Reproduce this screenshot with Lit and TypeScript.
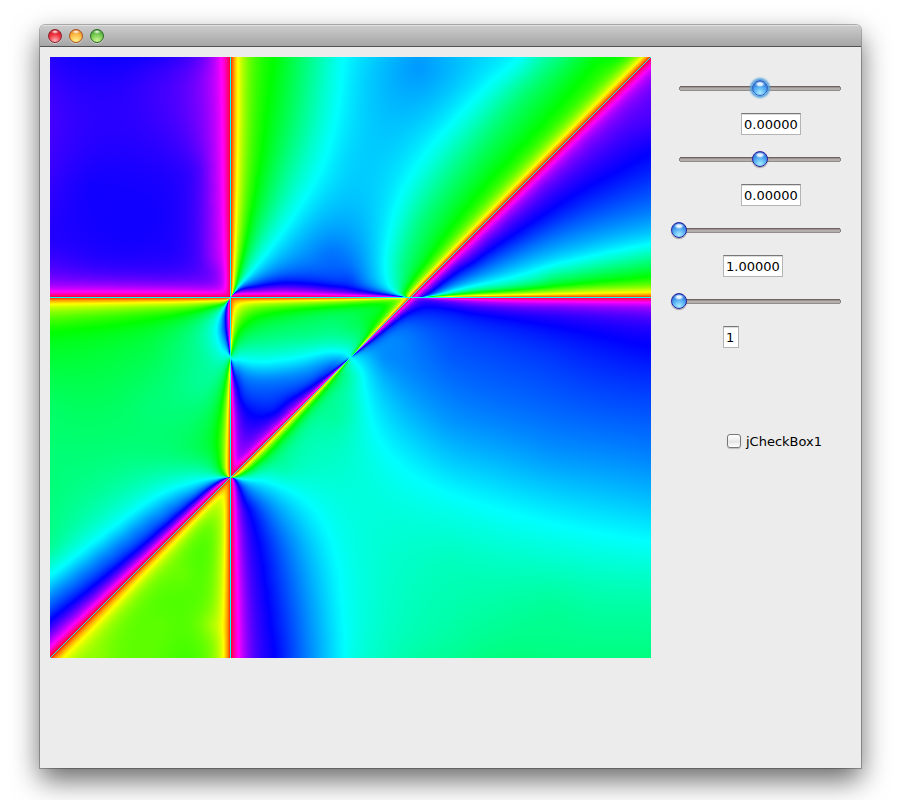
import { LitElement, html, css } from "lit";
import { customElement, property } from "lit/decorators.js";

/** Side of the plotted grid, in samples. */
const GRID = 601;

/** Contours of equal hue, keyed by hue in degrees: x, y pairs on the grid. */
const CONTOURS: Record<number, number[][]> = {
  60: [
    [187, 0, 187, 60, 186, 120, 184, 180, 182, 220], [592, 0, 549, 43, 483, 110, 417, 178, 380, 217],
    [600, 235, 500, 237, 440, 238], [233, 371, 203, 400, 190, 412], [174, 600, 174, 533, 175, 467, 173, 440],
    [13, 600, 50, 563, 100, 510, 150, 458], [0, 246, 100, 245, 160, 243], [178, 340, 178, 370, 177, 400],
    [182, 275, 185, 255, 195, 245, 250, 243, 310, 242],
  ],
  75: [[167, 450]],
  78: [[160, 567]],
  87: [[150, 467], [50, 600]],
  94: [[133, 517]],
  98: [[110, 567, 100, 600]],
  90: [[0, 257, 100, 250]],
  120: [
    [224, 0, 218, 50, 213, 93, 203, 150, 195, 190, 187, 223], [549, 0, 515, 38, 482, 75, 448, 111, 412, 153, 380, 196, 362, 223],
    [600, 218, 550, 223, 500, 229, 450, 234], [283, 323, 260, 348, 233, 379, 212, 402, 197, 415],
    [0, 275, 50, 270, 100, 263, 150, 253, 167, 247], [175, 325, 170, 350, 165, 383, 169, 408],
    [182, 290, 187, 276, 200, 263, 217, 257, 250, 252, 283, 249, 317, 246], [317, 278, 307, 291],
  ],
  125: [[317, 262]],
  132: [[0, 300]],
  138: [[150, 393]],
  139: [[100, 300]],
  142: [[300, 270]],
  144: [[0, 350]],
  146: [[133, 367]],
  148: [[0, 400], [100, 350], [130, 400]],
  150: [
    [257, 0, 247, 67, 220, 150], [508, 0, 472, 33, 440, 70, 402, 117, 368, 167, 352, 210],
    [600, 203, 550, 211, 500, 219], [600, 600, 500, 600], [0, 450], [100, 400], [200, 284, 233, 279, 267, 276],
  ],
  155: [[400, 600], [300, 320], [500, 550], [283, 360], [0, 490], [150, 300], [150, 330], [290, 280]],
  158: [[600, 553]],
  160: [[233, 413]],
  162: [[300, 350]],
  165: [[333, 600], [400, 500], [267, 400]],
  167: [[600, 520]],
  169: [[300, 400]],
  172: [[333, 450]],
  175: [[300, 600], [300, 500]],
  180: [
    [293, 0, 290, 33, 283, 73, 270, 113, 253, 143, 233, 173, 207, 207, 187, 230],
    [469, 0, 432, 33, 400, 67, 372, 100, 348, 143, 335, 200, 340, 230, 350, 239],
    [600, 187, 550, 197, 500, 209, 450, 222, 400, 233, 376, 239],
    [302, 304, 313, 327, 320, 360, 333, 390, 360, 417, 400, 437, 467, 458, 533, 473, 600, 484],
    [190, 421, 212, 423, 233, 430, 260, 447, 280, 480, 290, 527, 295, 600],
    [0, 518, 50, 480, 100, 443, 133, 428, 165, 421],
    [175, 247, 168, 263, 167, 276, 172, 291, 178, 298],
    [187, 303, 200, 305, 217, 305, 240, 302, 260, 298, 277, 295, 290, 296],
  ],
  190: [[300, 100], [400, 410]],
  193: [[320, 167]],
  196: [[333, 33], [350, 350], [600, 440]],
  204: [[367, 7], [500, 400], [400, 367]],
  209: [[333, 300], [600, 400]],
  210: [
    [300, 200], [257, 600, 252, 550, 238, 487, 215, 447, 195, 427], [0, 540, 50, 501, 100, 462, 133, 440, 160, 425],
    [600, 155, 550, 168, 500, 184, 450, 206, 400, 229], [190, 312, 203, 321, 217, 322, 250, 317, 280, 304],
  ],
  213: [[280, 195], [450, 350]],
  219: [[400, 300]],
  227: [[500, 300]],
  230: [[300, 223]],
  240: [
    [200, 231, 216, 227, 233, 225, 267, 227, 300, 232, 333, 237],
    [600, 95, 567, 114, 533, 132, 500, 153, 467, 175, 433, 197, 400, 220, 380, 235],
    [600, 290, 533, 275, 467, 263, 427, 257, 383, 250, 350, 260, 333, 273, 313, 290],
    [184, 423, 190, 433, 200, 450, 210, 487, 217, 533, 225, 600],
    [0, 562, 50, 523, 100, 482, 133, 453, 160, 430, 173, 422],
    [178, 247, 175, 260, 174, 273, 178, 293],
    [182, 308, 188, 333, 198, 351, 212, 359, 227, 355, 250, 338, 277, 317, 293, 304],
  ],
  244: [[40, 130], [60, 150]],
  248: [[0, 0], [100, 100], [0, 180], [100, 200]],
  252: [[100, 20]],
  257: [[600, 63]],
  259: [[130, 20], [150, 110, 150, 200], [0, 210], [207, 372]],
  270: [
    [150, 20], [0, 222, 100, 225, 160, 225], [600, 30, 550, 78, 517, 108, 483, 139, 417, 200],
    [600, 254, 500, 250, 420, 246], [198, 600, 196, 550, 192, 490, 187, 445], [0, 577, 50, 533, 100, 488, 150, 443],
    [184, 343, 188, 366, 194, 385, 207, 380, 223, 365, 250, 341],
  ],
  282: [[160, 20, 162, 100, 163, 200]],
  300: [
    [172, 20, 173, 100, 175, 200], [0, 235, 100, 235, 160, 235], [600, 9, 540, 67, 473, 133, 404, 200], [600, 244, 500, 243],
    [188, 600, 187, 533, 185, 467], [0, 590, 50, 543, 100, 495], [182, 366, 183, 400, 188, 407, 200, 396, 233, 365],
  ],
};

/** Points where the numerator of the field vanishes on a pole line. */
const BASE_POINTS = [180, 240, 180, 300, 180, 420, 300, 300, 360, 240];

const DEGREE = 8;
const FALLOFF = 0.15;
const SMOOTHING = 0.006;
const STEP = 20;
const unit = (p: number) => (p - 300) / 300;
const poles = (x: number, y: number) => (x + 0.4) * (y + 0.2) * (x + y);
/** Index of the region that the three pole lines cut out around a point. */
const region = (px: number, py: number) =>
  (px > 180 ? 1 : 0) + (py > 240 ? 2 : 0) + (px + py > 600 ? 4 : 0);
/** Distance to the nearest pole line, in grid steps. */
const poleDistance = (px: number, py: number) =>
  Math.min(Math.abs(px - 180), Math.abs(py - 240), Math.abs(px + py - 600) * Math.SQRT1_2);
const soften = (g: number) => g / Math.pow(1 + g * g, FALLOFF);

interface Sample {
  px: number;
  py: number;
  hue: number;
}

/** Points at a regular step along every contour, on a Catmull-Rom curve. */
function samples(): Sample[] {
  const out: Sample[] = [];
  for (const [deg, lines] of Object.entries(CONTOURS)) {
    const hue = Number(deg) / 360;
    for (const line of lines) {
      const last = line.length / 2 - 1;
      const at = (i: number, axis: number) => line[Math.max(0, Math.min(last, i)) * 2 + axis];
      for (let i = 0; i < last; i++) {
        const parts = Math.max(1, Math.round(Math.hypot(at(i + 1, 0) - at(i, 0), at(i + 1, 1) - at(i, 1)) / STEP));
        for (let k = 0; k < parts; k++) {
          const t = k / parts;
          const point = [0, 1].map((axis) => {
            const [a, b, c, d] = [at(i - 1, axis), at(i, axis), at(i + 1, axis), at(i + 2, axis)];
            return b + 0.5 * t * (c - a + t * (2 * a - 5 * b + 4 * c - d + t * (3 * (b - c) + d - a)));
          });
          out.push({ px: point[0], py: point[1], hue });
        }
      }
      out.push({ px: at(last, 0), py: at(last, 1), hue });
    }
  }
  return out;
}

function harden(t: number): number {
  let lo = 0;
  let hi = 1e4;
  for (let i = 0; i < 50; i++) {
    const mid = (lo + hi) / 2;
    if (soften(mid) < Math.abs(t)) lo = mid;
    else hi = mid;
  }
  return Math.sign(t) * lo;
}

function basis(x: number, y: number): number[] {
  const tx = [1, x];
  const ty = [1, y];
  for (let i = 2; i <= DEGREE; i++) {
    tx.push(2 * x * tx[i - 1] - tx[i - 2]);
    ty.push(2 * y * ty[i - 1] - ty[i - 2]);
  }
  const out: number[] = [];
  for (let i = 0; i <= DEGREE; i++) for (let j = 0; i + j <= DEGREE; j++) out.push(tx[i] * ty[j]);
  return out;
}

/** Gauss-Jordan elimination on an augmented matrix. */
function solve(m: number[][]): number[] {
  const n = m.length;
  for (let c = 0; c < n; c++) {
    let p = c;
    for (let r = c + 1; r < n; r++) if (Math.abs(m[r][c]) > Math.abs(m[p][c])) p = r;
    [m[c], m[p]] = [m[p], m[c]];
    for (let r = 0; r < n; r++) {
      if (r === c) continue;
      const f = m[r][c] / m[c][c];
      for (let k = c; k <= n; k++) m[r][k] -= f * m[c][k];
    }
  }
  return m.map((row, i) => row[n] / row[i]);
}

/** Weighted least squares for the numerator of the field. */
function fit(points: Sample[]): number[] {
  const n = ((DEGREE + 1) * (DEGREE + 2)) / 2;
  const m = Array.from({ length: n }, (_, i) => {
    const row = new Array(n + 1).fill(0);
    row[i] = 1e-2;
    return row;
  });
  const add = (x: number, y: number, value: number, w: number) => {
    const b = basis(x, y);
    for (let i = 0; i < n; i++) {
      for (let j = 0; j < n; j++) m[i][j] += w * w * b[i] * b[j];
      m[i][n] += w * w * b[i] * value;
    }
  };
  for (const { px, py, hue } of points) {
    const t = Math.tan(Math.PI * (0.5 - hue));
    const d = poles(unit(px), unit(py));
    add(unit(px), unit(py), harden(t) * d, 1 / ((Math.abs(d) + 0.003) * (1 + t * t)));
  }
  for (let k = 0; k < BASE_POINTS.length; k += 2) add(unit(BASE_POINTS[k]), unit(BASE_POINTS[k + 1]), 0, 30000);
  return solve(m);
}

function baseHue(coef: number[], px: number, py: number): number {
  const x = unit(px);
  const y = unit(py);
  const b = basis(x, y);
  let sum = 0;
  for (let i = 0; i < b.length; i++) sum += b[i] * coef[i];
  return 0.5 - Math.atan(soften(sum / poles(x, y))) / Math.PI;
}

interface Spline {
  xs: number[];
  ys: number[];
  weights: number[];
}

const kernel = (dx: number, dy: number) => Math.sqrt(dx * dx + dy * dy + 0.0004);

/** One smoothing spline per region, for what the fitted field leaves over. */
function corrections(points: Sample[], coef: number[]): Spline[] {
  return Array.from({ length: 8 }, (_, index) => {
    const cell = points.filter(({ px, py }) => region(px, py) === index && poleDistance(px, py) > 1);
    const n = cell.length;
    if (!n) return { xs: [], ys: [], weights: [0] };
    const xs = cell.map(({ px }) => unit(px));
    const ys = cell.map(({ py }) => unit(py));
    const m = cell.map(({ px, py, hue }, i) => {
      const slack = SMOOTHING * (1 + 40 / (1 + poleDistance(px, py)));
      const row = xs.map((_, j) => -kernel(xs[i] - xs[j], ys[i] - ys[j]) + (i === j ? slack : 0));
      row.push(1, hue - baseHue(coef, px, py));
      return row;
    });
    m.push([...new Array(n).fill(1), 0, 0]);
    return { xs, ys, weights: solve(m) };
  });
}

function correction({ xs, ys, weights }: Spline, x: number, y: number): number {
  let sum = weights[xs.length];
  for (let i = 0; i < xs.length; i++) sum -= weights[i] * kernel(x - xs[i], y - ys[i]);
  return sum;
}

function channel(hue: number, offset: number): number {
  const k = (offset + hue * 6) % 6;
  return Math.round(255 * (1 - Math.max(0, Math.min(k, 4 - k, 1))));
}

@customElement("hue-plot")
export class HuePlot extends LitElement {
  static styles = css`
    :host { display: block; }
    .plot { display: block; width: 100%; height: auto; }
  `;

  firstUpdated() {
    const canvas = this.renderRoot.querySelector("canvas") as HTMLCanvasElement;
    const ctx = canvas.getContext("2d")!;
    const image = ctx.createImageData(GRID, GRID);
    const points = samples();
    const coef = fit(points);
    const splines = corrections(points, coef);
    for (let py = 0; py < GRID; py++) {
      for (let px = 0; px < GRID; px++) {
        let hue = 0.5;
        const dist = poleDistance(px, py);
        if (dist > 0) {
          const extra = correction(splines[region(px, py)], unit(px), unit(py));
          hue = baseHue(coef, px, py) + extra * Math.min(1, dist / 8);
          hue = Math.max(0, Math.min(1, hue));
        }
        const o = (py * GRID + px) * 4;
        image.data[o] = channel(hue, 5);
        image.data[o + 1] = channel(hue, 3);
        image.data[o + 2] = channel(hue, 1);
        image.data[o + 3] = 255;
      }
    }
    ctx.putImageData(image, 0, 0);
  }

  render() {
    return html`<canvas class="plot" width=${GRID} height=${GRID} role="img" aria-label="Hue plot"></canvas>`;
  }
}

@customElement("value-slider")
export class ValueSlider extends LitElement {
  @property() name = "";
  @property() value = "";
  @property({ type: Number }) position = 0;
  @property({ type: Boolean }) active = false;
  @property({ type: Boolean }) left = false;
  @property({ type: Boolean }) short = false;

  static styles = css`
    :host { display: flex; flex-direction: column; gap: 17px; }
    .range {
      -webkit-appearance: none; appearance: none; display: block; box-sizing: border-box;
      width: 100%; height: 16px; margin: 0; outline: none; background: none;
    }
    .range::-webkit-slider-runnable-track {
      height: 16px;
      background:
        linear-gradient(#6f6361 0 1px, #9d9492 1px 2px, #b3afae 2px 4px, #948c8b 4px 5px) center 6px / calc(100% - 18px) 5px no-repeat,
        linear-gradient(#8b8382, #8b8382) center 7px / calc(100% - 16px) 3px no-repeat;
    }
    .range::-webkit-slider-thumb {
      -webkit-appearance: none; box-sizing: border-box; width: 16px; height: 16px; border-radius: 50%;
      border: 1px solid #2a22a0;
      background:
        radial-gradient(ellipse 5px 3px at 50% 22%, #e8f4ff 0 40%, transparent 100%),
        radial-gradient(circle at 50% 85%, #a8ecff 0, #5cb4f4 40%, #2b78dc 75%, #1a48bc 100%);
      box-shadow: 0 1px 1px #0005;
    }
    .active::-webkit-slider-thumb { border-color: #2a62c8; box-shadow: 0 0 2px 2px #55a3dc; }
    .field {
      box-sizing: border-box; width: 60px; height: 22px; margin: 0 0 0 70px; padding: 1px 1px 0 2px;
      border: 1px solid #b4b4b4; border-top: 1px solid #777; border-radius: 0; outline: none;
      background: #fff; box-shadow: inset 0 1px #ddd; color: #000; font: 13px "DejaVu Sans", sans-serif;
    }
    .left { margin-left: 52px; }
    .short { width: 16px; }
  `;

  render() {
    return html`
      <input class="range ${this.active ? "active" : ""}" type="range" min="0" max="100"
        .value=${String(this.position)} aria-label=${this.name} />
      <input class="field ${this.left ? "left" : ""} ${this.short ? "short" : ""}" type="text"
        .value=${this.value} aria-label="${this.name} value" />
    `;
  }
}

@customElement("app-root")
export class AppRoot extends LitElement {
  static styles = css`
    :host {
      display: flex; box-sizing: border-box; min-height: 100vh; padding: 25px 40px 32px;
      background: #fff; overflow: hidden; font: 13px "DejaVu Sans", sans-serif; color: #000;
    }
    .window {
      flex: 1; min-width: 0; display: flex; flex-direction: column; background: #ececec; border-radius: 5px 5px 0 0;
      box-shadow: 0 0 0 1px #0004, 0 12px 28px #0009;
    }
    .titlebar {
      box-sizing: border-box; height: 22px; display: flex; align-items: center; gap: 7px; padding: 0 8px;
      border-bottom: 1px solid #515151; border-radius: 5px 5px 0 0;
      background: linear-gradient(#e0e0e0 0 1px, #cbcbcb 1px, #a6a6a6);
    }
    .light {
      box-sizing: border-box; width: 14px; height: 14px; padding: 0; border-radius: 50%; border: 1px solid;
      box-shadow: 0 1px #fff6;
    }
    .close { border-color: #8a2430; background: radial-gradient(ellipse 4px 2px at 50% 15%, #fff, transparent), radial-gradient(circle at 50% 90%, #ffb4b8, #f03844 50%, #c00818); }
    .minimize { border-color: #a8541c; background: radial-gradient(ellipse 4px 2px at 50% 15%, #fff, transparent), radial-gradient(circle at 50% 90%, #fff28c, #fbb842 55%, #d8641c); }
    .zoom { border-color: #2c6c24; background: radial-gradient(ellipse 4px 2px at 50% 15%, #fff, transparent), radial-gradient(circle at 50% 90%, #ccf890, #74c850 55%, #2c8428); }
    .body {
      flex: 1; display: grid; grid-template-columns: minmax(0, 601fr) minmax(0, 178fr); column-gap: 20px;
      align-items: start; padding: 10px 12px 10px 10px;
    }
    .controls { display: flex; flex-direction: column; gap: 16px; padding-top: 23px; }
    .check { display: flex; align-items: center; gap: 5px; height: 16px; margin: 69px 0 0 56px; }
    .box {
      -webkit-appearance: none; appearance: none; box-sizing: border-box; width: 14px; height: 14px; margin: 0;
      border: 1px solid #777; border-radius: 3px; background: linear-gradient(#fff, #eee 45%, #e2e2e2 50%, #fff);
      box-shadow: 0 1px 1px #0003;
    }
  `;

  render() {
    return html`
      <main class="window">
        <header class="titlebar">
          <button class="light close" aria-label="Close"></button>
          <button class="light minimize" aria-label="Minimize"></button>
          <button class="light zoom" aria-label="Zoom"></button>
        </header>
        <div class="body">
          <hue-plot></hue-plot>
          <section class="controls">
            <value-slider name="First" value="0.00000" position="50" active></value-slider>
            <value-slider name="Second" value="0.00000" position="50"></value-slider>
            <value-slider name="Third" value="1.00000" position="0" left></value-slider>
            <value-slider name="Fourth" value="1" position="0" left short></value-slider>
            <label class="check"><input class="box" type="checkbox" /><span>jCheckBox1</span></label>
          </section>
        </div>
      </main>
    `;
  }
}
